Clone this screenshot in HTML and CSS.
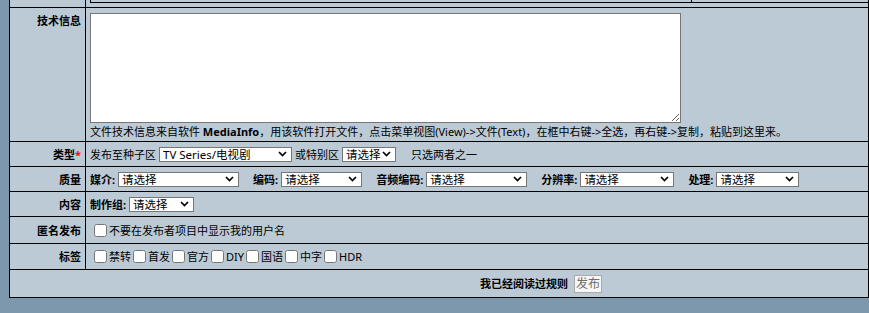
FILE: index.html
```html
<!DOCTYPE html>
<html lang="zh-CN">
<head>
    <meta charset="UTF-8">
    <title>发布种子</title>
    <link rel="stylesheet" href="styles.css">
</head>
<body>
    <form class="upload">
        <div class="lbl"></div>
        <div class="fld fld-prev">
            <div class="prev"><div class="prev-a"></div></div>
        </div>

        <div class="lbl lbl-top">技术信息</div>
        <div class="fld fld-top">
            <textarea class="info" name="technical_info"></textarea>
            <div class="hint">文件技术信息来自软件 <b>MediaInfo</b>，用该软件打开文件，点击菜单视图(View)-&gt;文件(Text)，在框中右键-&gt;全选，再右键-&gt;复制，粘贴到这里来。</div>
        </div>

        <div class="lbl">类型<span class="req">*</span></div>
        <div class="fld">
            <span>发布至种子区</span>
            <select class="sel sel-type" name="type">
                <option>TV Series/电视剧</option>
            </select>
            <span class="gap-s">或特别区</span>
            <select class="sel sel-special" name="special">
                <option>请选择</option>
            </select>
            <span class="gap-l">只选两者之一</span>
        </div>

        <div class="lbl">质量</div>
        <div class="fld">
            <span class="opt"><b>媒介:</b><select class="sel w-media"><option>请选择</option></select></span>
            <span class="opt"><b>编码:</b><select class="sel w-codec"><option>请选择</option></select></span>
            <span class="opt"><b>音频编码:</b><select class="sel w-audio"><option>请选择</option></select></span>
            <span class="opt"><b>分辨率:</b><select class="sel w-res"><option>请选择</option></select></span>
            <span class="opt"><b>处理:</b><select class="sel w-proc"><option>请选择</option></select></span>
        </div>

        <div class="lbl">内容</div>
        <div class="fld">
            <span class="opt"><b>制作组:</b><select class="sel w-team"><option>请选择</option></select></span>
        </div>

        <div class="lbl">匿名发布</div>
        <div class="fld">
            <label class="chk"><input type="checkbox" name="uplver">不要在发布者项目中显示我的用户名</label>
        </div>

        <div class="lbl">标签</div>
        <div class="fld">
            <label class="chk"><input type="checkbox" name="tags[]">禁转</label>
            <label class="chk"><input type="checkbox" name="tags[]">首发</label>
            <label class="chk"><input type="checkbox" name="tags[]">官方</label>
            <label class="chk"><input type="checkbox" name="tags[]">DIY</label>
            <label class="chk"><input type="checkbox" name="tags[]">国语</label>
            <label class="chk"><input type="checkbox" name="tags[]">中字</label>
            <label class="chk"><input type="checkbox" name="tags[]">HDR</label>
        </div>

        <div class="submit-row">
            <b>我已经阅读过规则</b>
            <button type="submit" class="btn" disabled>发布</button>
        </div>
    </form>
</body>
</html>
```

FILE: styles.css
```css
html, body {
    overflow: hidden;
}

body {
    margin: 0;
    background-color: #7d98ad;
    font-family: "Noto Sans", "Noto Sans CJK SC", sans-serif;
    font-size: 11px;
    line-height: 15px;
    color: #000;
}

.upload {
    display: grid;
    grid-template-columns: 76px 986px;
    grid-template-rows: 8px 134px 25px 25px 25px 27px 26px 28px;
    margin-left: 9px;
    border-left: 1px solid #000;
    border-right: 1px solid #000;
    background-color: #bccad6;
}

.lbl,
.fld,
.submit-row {
    box-sizing: border-box;
    border-bottom: 1px solid #000;
}

.lbl {
    display: flex;
    align-items: center;
    justify-content: flex-end;
    padding-right: 4px;
    border-right: 1px solid #000;
    font-weight: bold;
}

.lbl-top {
    align-items: flex-start;
    padding-top: 5px;
}

.req {
    color: red;
}

.fld {
    display: flex;
    align-items: center;
    padding: 0 4px;
    white-space: nowrap;
}

.fld-top {
    display: block;
    padding-top: 5px;
}

.fld-prev {
    align-items: flex-start;
}

.prev {
    display: grid;
    grid-template-columns: 601px 1fr;
    flex: 1;
    height: 3px;
    box-sizing: border-box;
    border-left: 1px solid #000;
    border-bottom: 1px solid #000;
}

.prev-a {
    border-right: 1px solid #000;
}

.info {
    display: block;
    box-sizing: border-box;
    width: 591px;
    height: 110px;
    margin: 0;
    border: 1px solid #767676;
    background: #fff;
}

.hint {
    margin-top: 1px;
}

.sel {
    appearance: none;
    -webkit-appearance: none;
    box-sizing: border-box;
    height: 15px;
    margin: 0 0 0 3px;
    padding: 0 13px 0 3px;
    font-family: inherit;
    font-size: 11.5px;
    line-height: 13px;
    color: #000;
    border: 1px solid #767676;
    border-radius: 0;
    background: #fff url("data:image/svg+xml,%3Csvg xmlns='http://www.w3.org/2000/svg' width='9' height='6'%3E%3Cpath d='M1 1l3.5 3.5L8 1' fill='none' stroke='%23000' stroke-width='1.7'/%3E%3C/svg%3E") no-repeat right 4px center;
}

.sel-type { width: 133px; }
.sel-special { width: 54px; }
.w-media { width: 121px; }
.w-codec { width: 81px; }
.w-audio { width: 101px; }
.w-res { width: 94px; }
.w-proc { width: 83px; }
.w-team { width: 65px; }

.gap-s {
    margin-left: 3px;
}

.gap-l {
    margin-left: 15px;
}

.opt {
    display: flex;
    align-items: center;
    margin-right: 14px;
}

.chk {
    display: flex;
    align-items: center;
}

.chk input {
    width: 13px;
    height: 13px;
    margin: 0 2px 0 2px;
}

.chk:first-child input {
    margin-left: 4px;
}

.submit-row {
    grid-column: 1 / 3;
    display: flex;
    align-items: center;
    justify-content: center;
    gap: 6px;
}

.btn {
    height: 18px;
    padding: 0 1px;
    font-family: inherit;
    font-size: 12px;
    line-height: 14px;
    color: #6d6d6d;
    background-color: #f6f6f6;
    border: 1px solid #a9a9a9;
    border-radius: 0;
}
```
